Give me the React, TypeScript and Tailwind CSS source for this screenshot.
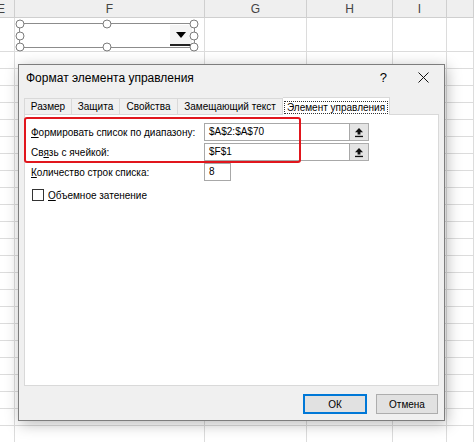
import React from "react";

const COLS = [
  { name: "E", w: "w-[15px]" },
  { name: "F", w: "w-[190px]" },
  { name: "G", w: "w-[102px]" },
  { name: "H", w: "w-[86px]" },
  { name: "I", w: "w-[54px]" },
  { name: "", w: "flex-1" },
];

const ROWS = Array.from({ length: 24 }, (_, i) => i);

function UpArrow() {
  return (
    <svg width="10" height="11" viewBox="0 0 10 11">
      <path d="M5 1 L9 5.2 H6.4 V7.6 H3.6 V5.2 H1 Z" fill="#111" />
      <rect x="1" y="8.8" width="8" height="1.3" fill="#111" />
    </svg>
  );
}

function RefInput({ value }: { value: string }) {
  return (
    <div className="flex h-[18px]">
      <div className="flex h-full w-[146px] items-center border border-[#a8a8a8] bg-white pl-[4px] leading-none">
        {value}
      </div>
      <div className="flex h-full w-[19px] items-center justify-center border border-l-0 border-[#adadad] bg-[#e5e5e5]">
        <UpArrow />
      </div>
    </div>
  );
}

function Handle({ className }: { className: string }) {
  return (
    <div
      className={`absolute h-[9px] w-[9px] -translate-x-1/2 -translate-y-1/2 rounded-full border border-[#7c7c7c] bg-white ${className}`}
    />
  );
}

export default function App() {
  return (
    <div
      className="relative h-[442px] w-[474px] overflow-hidden whitespace-nowrap bg-white text-black"
      style={{ fontFamily: '"Liberation Sans", Arial, sans-serif' }}
    >
      {/* column headers */}
      <div className="flex h-[18px] bg-[#efefef] text-[12px] text-[#444]">
        {COLS.map((c) => (
          <div
            key={c.name || "j"}
            className={`${c.w} flex items-center justify-center border-b border-r border-[#cfcfcf]`}
          >
            {c.name === "E" ? <span className="-ml-[12px]">E</span> : c.name}
          </div>
        ))}
      </div>

      {/* grid body */}
      {ROWS.map((r) => (
        <div key={r} className={`flex ${r === 0 ? "h-[34px]" : "h-[17px]"}`}>
          {COLS.map((c) => (
            <div key={c.name || "j"} className={`${c.w} border-b border-r border-[#dcdcdc]`} />
          ))}
        </div>
      ))}

      {/* combo box control on the sheet */}
      <div className="absolute left-[19px] top-[23px] h-[25px] w-[176px] border border-[#8c8c8c] bg-white">
        <div className="absolute right-[2px] top-[1px] flex h-[21px] w-[22px] items-center justify-center border-b-2 border-[#222] bg-[#f4f4f4]">
          <svg width="10" height="6" viewBox="0 0 10 6">
            <path d="M0 0 H10 L5 6 Z" fill="#000" />
          </svg>
        </div>
        <Handle className="left-0 top-0" />
        <Handle className="left-1/2 top-0" />
        <Handle className="left-full top-0" />
        <Handle className="left-0 top-1/2" />
        <Handle className="left-full top-1/2" />
        <Handle className="left-0 top-full" />
        <Handle className="left-1/2 top-full" />
        <Handle className="left-full top-full" />
      </div>

      {/* dialog */}
      <div className="absolute left-[18px] top-[64px] flex h-[357px] w-[427px] flex-col border border-[#7d7d7d] bg-[#f0f0f0] text-[10px] shadow-[2px_3px_14px_rgba(0,0,0,0.28)]">
        <div className="flex h-[25px] items-center pl-[7px] text-[12px]">
          <span>Формат элемента управления</span>
          <span className="ml-auto mr-[31px] text-[13px]">?</span>
          <svg width="11" height="11" viewBox="0 0 11 11" className="mr-[15px]">
            <path d="M0.5 0.5 L10.5 10.5 M10.5 0.5 L0.5 10.5" stroke="#111" strokeWidth="1" />
          </svg>
        </div>

        {/* tabs */}
        <div className="flex h-[24px] items-end pl-[5px]">
          <div className="flex h-[16px] w-[48px] items-center justify-center border border-b-0 border-[#d9d9d9]">
            Размер
          </div>
          <div className="flex h-[16px] w-[48px] items-center justify-center border border-b-0 border-l-0 border-[#d9d9d9]">
            Защита
          </div>
          <div className="flex h-[16px] w-[58px] items-center justify-center border border-b-0 border-l-0 border-[#d9d9d9]">
            Свойства
          </div>
          <div className="flex h-[16px] w-[105px] items-center justify-center border border-b-0 border-l-0 border-[#d9d9d9]">
            Замещающий текст
          </div>
          <div className="relative z-10 -mb-px flex h-[18px] w-[107px] items-center justify-center border border-b-0 border-l-0 border-[#d9d9d9] bg-white pt-[1px]">
            <span className="border border-dotted border-[#333] px-[2px] leading-[11px]">Элемент управления</span>
          </div>
        </div>

        {/* panel */}
        <div className="relative mx-[5px] flex h-[272px] flex-col border border-[#d9d9d9] bg-white pl-[6px] pt-[8px]">
          <div className="flex h-[18px] items-center">
            <span className="w-[173px]">
              <u>Ф</u>ормировать список по диапазону:
            </span>
            <RefInput value="$A$2:$A$70" />
          </div>
          <div className="mt-[2px] flex h-[18px] items-center">
            <span className="w-[173px]">
              Св<u>я</u>зь с ячейкой:
            </span>
            <RefInput value="$F$1" />
          </div>
          <div className="mt-[2px] flex h-[18px] items-center">
            <span className="w-[173px]">
              <u>К</u>оличество строк списка:
            </span>
            <div className="flex h-[18px] w-[27px] items-center border border-[#a8a8a8] pl-[4px] leading-none">8</div>
          </div>
          <div className="mt-[8px] flex h-[12px] items-center">
            <div className="ml-[1px] mr-[4px] h-[12px] w-[12px] border border-[#333] bg-white" />
            <span>
              <u>О</u>бъемное затенение
            </span>
          </div>

          {/* red annotation */}
          <div className="absolute -left-px top-[2px] h-[46px] w-[277px] rounded-[3px] border-2 border-[#e1161d]" />
        </div>

        {/* buttons */}
        <div className="flex flex-1 items-start justify-end gap-[9px] pr-[6px] pt-[8px]">
          <button className="flex h-[20px] w-[64px] items-center justify-center border border-[#0078d7] bg-[#e1e1e1] shadow-[inset_0_0_0_1px_#0078d7]">
            ОК
          </button>
          <button className="flex h-[20px] w-[62px] items-center justify-center border border-[#adadad] bg-[#e1e1e1]">
            Отмена
          </button>
        </div>
      </div>
    </div>
  );
}
